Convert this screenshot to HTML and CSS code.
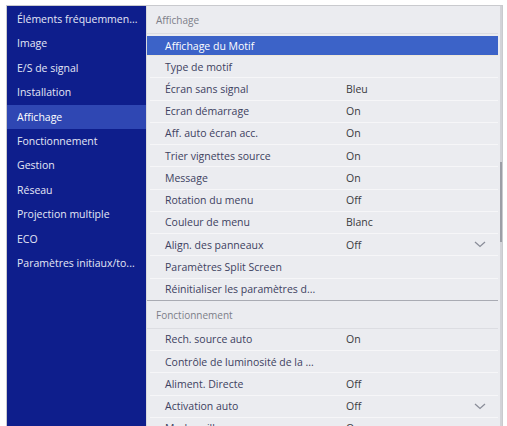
FILE: index.html
```html
<!DOCTYPE html>
<html lang="fr">
<head>
    <meta charset="UTF-8">
    <meta name="viewport" content="width=device-width, initial-scale=1.0">
    <title>Menu de configuration</title>
    <link rel="stylesheet" href="styles.css">
</head>
<body>
    <div class="menu-frame">
        <div class="main-menu">
            <div class="main-item">Éléments fréquemmen...</div>
            <div class="main-item">Image</div>
            <div class="main-item">E/S de signal</div>
            <div class="main-item">Installation</div>
            <div class="main-item active">Affichage</div>
            <div class="main-item">Fonctionnement</div>
            <div class="main-item">Gestion</div>
            <div class="main-item">Réseau</div>
            <div class="main-item">Projection multiple</div>
            <div class="main-item">ECO</div>
            <div class="main-item">Paramètres initiaux/to...</div>
        </div>

        <div class="sub-menu">
            <div class="section-title">Affichage</div>
            <div class="row selected"><span class="label">Affichage du Motif</span></div>
            <div class="row"><span class="label">Type de motif</span></div>
            <div class="row"><span class="label">Écran sans signal</span><span class="value">Bleu</span></div>
            <div class="row"><span class="label">Ecran démarrage</span><span class="value">On</span></div>
            <div class="row"><span class="label">Aff. auto écran acc.</span><span class="value">On</span></div>
            <div class="row"><span class="label">Trier vignettes source</span><span class="value">On</span></div>
            <div class="row"><span class="label">Message</span><span class="value">On</span></div>
            <div class="row"><span class="label">Rotation du menu</span><span class="value">Off</span></div>
            <div class="row"><span class="label">Couleur de menu</span><span class="value">Blanc</span></div>
            <div class="row"><span class="label">Align. des panneaux</span><span class="value">Off</span><span class="chevron"><svg width="12" height="7" viewBox="0 0 12 7"><path d="M1 1 L6 5.5 L11 1" fill="none" stroke="#8a8d99" stroke-width="1.3"/></svg></span></div>
            <div class="row"><span class="label">Paramètres Split Screen</span></div>
            <div class="row last"><span class="label">Réinitialiser les paramètres d...</span></div>

            <div class="section-title">Fonctionnement</div>
            <div class="row"><span class="label">Rech. source auto</span><span class="value">On</span></div>
            <div class="row"><span class="label">Contrôle de luminosité de la ...</span></div>
            <div class="row"><span class="label">Aliment. Directe</span><span class="value">Off</span></div>
            <div class="row"><span class="label">Activation auto</span><span class="value">Off</span><span class="chevron"><svg width="12" height="7" viewBox="0 0 12 7"><path d="M1 1 L6 5.5 L11 1" fill="none" stroke="#8a8d99" stroke-width="1.3"/></svg></span></div>
            <div class="row"><span class="label">Mode veille</span><span class="value">On</span></div>

            <div class="scrollbar"><div class="scroll-thumb"></div></div>
        </div>
    </div>
</body>
</html>
```

FILE: styles.css
```css
body {
    margin: 0;
    background: #ffffff;
    font-family: "Open Sans", "Noto Sans", sans-serif;
    font-size: 10.5px;
}
.menu-frame {
    display: grid;
    grid-template-columns: 139px 1fr;
    margin: 5px 0 0 6px;
    width: 497px;
    height: 421px;
    border: 1px solid #c9cace;
    border-bottom: none;
    box-sizing: border-box;
    overflow: hidden;
}
.main-menu {
    background: #0e1e8c;
    padding-top: 1px;
}
.main-item {
    height: 24.4px;
    line-height: 24.4px;
    padding-left: 10px;
    color: #e4e7f6;
    white-space: nowrap;
}
.main-item.active {
    background: #2f47b3;
    color: #ffffff;
}
.sub-menu {
    position: relative;
    background: #ebecf0;
    border-left: 1px solid #d8d9de;
    padding-right: 4px;
}
.section-title {
    height: 27px;
    line-height: 29px;
    padding-left: 9px;
    color: #7c7e88;
    font-size: 10px;
    border-bottom: 1px solid #dcdde2;
}
.row {
    display: flex;
    align-items: center;
    height: 22.25px;
    margin-left: 3px;
    padding-left: 15px;
    color: #3d4160;
    border-bottom: 1px solid #f6f6f8;
    box-sizing: border-box;
    white-space: nowrap;
}
.row.selected {
    height: 22px;
    margin-left: 0;
    padding-left: 18px;
    background: #3c63c8;
    color: #ffffff;
    border-top: 2px solid #ebecf0;
    border-bottom: 1px solid #efe8d8;
}
.row.last {
    border-bottom: 1px solid #a9abb3;
    margin-left: 0;
    padding-left: 18px;
}
.label {
    width: 181px;
}
.value {
    color: #3a3a40;
}
.chevron {
    margin-left: auto;
    margin-right: 12px;
    display: flex;
}
.scrollbar {
    position: absolute;
    top: 0;
    right: 0;
    bottom: 0;
    width: 2px;
    background: #d2d3d8;
}
.scroll-thumb {
    margin-top: 156px;
    height: 80px;
    background: #9c9ea6;
}
```
